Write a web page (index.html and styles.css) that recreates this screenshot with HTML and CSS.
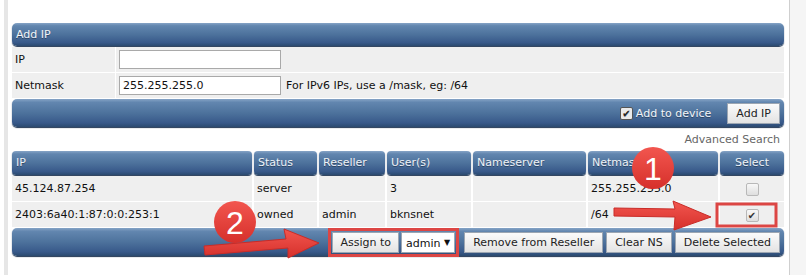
FILE: index.html
```html
<!DOCTYPE html>
<html>

<head>
	<meta charset="utf-8">
	<title>IP Management</title>
	<link rel="stylesheet" href="styles.css">
</head>

<body class = "body">

	<div class = "page">

		<!-- add ip form -->
		<div class = "bar titleBar">Add IP</div>
		<div class = "formRow">
			<div class = "formLabel">IP</div>
			<div class = "formField"><span class = "textBox"></span></div>
		</div>
		<div class = "formRow">
			<div class = "formLabel">Netmask</div>
			<div class = "formField"><span class = "textBox">255.255.255.0</span><span class = "hint">For IPv6 IPs, use a /mask, eg: /64</span></div>
		</div>
		<div class = "bar footBar">
			<span class = "checkBox checked dark"></span>
			<span class = "footLabel">Add to device</span>
			<span class = "button">Add IP</span>
		</div>

		<div class = "searchLink">Advanced Search</div>

		<!-- ip list -->
		<div class = "ipGrid">
			<div class = "head">IP</div>
			<div class = "head">Status</div>
			<div class = "head">Reseller</div>
			<div class = "head">User(s)</div>
			<div class = "head">Nameserver</div>
			<div class = "head">Netmask</div>
			<div class = "head center">Select</div>

			<div class = "cell">45.124.87.254</div>
			<div class = "cell">server</div>
			<div class = "cell"></div>
			<div class = "cell">3</div>
			<div class = "cell"></div>
			<div class = "cell">255.255.255.0</div>
			<div class = "cell center"><span class = "checkBox"></span></div>

			<div class = "cell">2403:6a40:1:87:0:0:253:1</div>
			<div class = "cell">owned</div>
			<div class = "cell">admin</div>
			<div class = "cell">bknsnet</div>
			<div class = "cell"></div>
			<div class = "cell">/64</div>
			<div class = "cell center"><span class = "checkBox checked"></span></div>
		</div>
		<div class = "bar footBar">
			<span class = "assignGroup">
				<span class = "button">Assign to</span><span class = "select">admin <span class = "arrowDown">&#9660;</span></span>
			</span>
			<span class = "button">Remove from Reseller</span>
			<span class = "button">Clear NS</span>
			<span class = "button">Delete Selected</span>
		</div>

	</div>

	<!-- red annotations drawn over the screenshot -->
	<svg class = "notes" width = "806" height = "275" viewBox = "0 0 806 275">
		<defs>
			<linearGradient id = "redFill" x1 = "0" y1 = "0" x2 = "0" y2 = "1">
				<stop offset = "0" stop-color = "#f2564f"/>
				<stop offset = "1" stop-color = "#d6302b"/>
			</linearGradient>
		</defs>
		<rect x = "717" y = "204" width = "59" height = "22" fill = "none" stroke = "#dc4644" stroke-width = "3"/>
		<polygon points = "614,208 675,209 673,201 711,217 674,230 675,217 614,216" fill = "url(#redFill)" stroke = "#c92c28" stroke-width = "1" stroke-linejoin = "round"/>
		<polygon points = "204,246 286,239 284,229 319,243 288,258 288,248 205,255" fill = "url(#redFill)" stroke = "#c92c28" stroke-width = "1" stroke-linejoin = "round"/>
		<circle cx = "653" cy = "168" r = "21" fill = "url(#redFill)"/>
		<text x = "653" y = "180" class = "noteNum">1</text>
		<circle cx = "235" cy = "222" r = "21" fill = "url(#redFill)"/>
		<text x = "235" y = "234" class = "noteNum">2</text>
	</svg>

</body>

</html>
```

FILE: styles.css
```css
.body {
	margin: 0;
	width: 806px;
	height: 275px;
	overflow: hidden;
	position: relative;
	background: linear-gradient(90deg, #FFFFFF 4px, #F5F5F5 4px);
	font: 11px "DejaVu Sans", Verdana, sans-serif;
	color: #111111;
}

.page {
	margin-left: 4px;
	width: 772px;
	height: 252px;
	padding: 23px 5px 0 4px;
	background-color: #FFFFFF;
	border-left: 4px solid #E6E6E6;
	border-right: 1px solid #CFCFCF;
}

.bar {
	background: linear-gradient(to bottom, #86A4C6 0, #6286AF 12%, #4D729C 50%, #38598A 85%, #2B4A6F 100%);
	border-radius: 5px;
	box-shadow: 0 1px 1px #1E3452;
	color: #F2F5F9;
	text-shadow: 0 1px 0 rgba(0, 0, 0, 0.35);
}

.titleBar {
	height: 23px;
	line-height: 23px;
	padding-left: 4px;
	margin-bottom: 1px;
}

.formRow {
	display: flex;
	height: 25px;
	margin-top: 1px;
	background-color: #EFEFEF;
}

.formLabel {
	width: 100px;
	padding-left: 3px;
	line-height: 25px;
	border-right: 1px solid #FFFFFF;
}

.formField {
	display: flex;
	align-items: center;
	padding-left: 3px;
}

.textBox {
	display: inline-block;
	width: 157px;
	height: 17px;
	line-height: 17px;
	padding-left: 3px;
	background-color: #FFFFFF;
	border: 1px solid #A9A9A9;
	color: #111111;
}

.hint {
	margin-left: 5px;
}

.footBar {
	display: flex;
	justify-content: flex-end;
	align-items: center;
	gap: 3px;
	height: 28px;
	margin-top: 1px;
	padding-right: 4px;
}

.footLabel {
	margin-left: 0;
	margin-right: 13px;
}

.button {
	display: inline-block;
	height: 19px;
	line-height: 19px;
	padding: 0 8px;
	background: linear-gradient(to bottom, #FBFBFB, #E3E3E3);
	border: 1px solid #9CA6B2;
	color: #222222;
	text-shadow: none;
}

.assignGroup {
	display: inline-flex;
	gap: 2px;
	padding: 1px;
	margin-right: 5px;
	outline: 3px solid #DC4644;
}

.assignGroup .button {
	padding: 0 7px;
}

.select {
	display: inline-block;
	height: 19px;
	line-height: 19px;
	padding: 0 4px;
	background-color: #FFFFFF;
	border: 1px solid #9CA6B2;
	color: #111111;
	text-shadow: none;
}

.arrowDown {
	font-size: 8px;
	vertical-align: 2px;
}

.checkBox {
	display: inline-flex;
	align-items: center;
	justify-content: center;
	width: 11px;
	height: 11px;
	border: 1px solid #B8B8B8;
	border-radius: 2px;
	background: linear-gradient(to bottom, #F8F8F8, #DEDEDE);
	vertical-align: middle;
}

.checked::after {
	content: "\2714";
	font-size: 10px;
	line-height: 11px;
	color: #333333;
}

.dark {
	background: #EAEAEA;
	border-color: #555555;
}

.dark::after {
	color: #222222;
}

.searchLink {
	height: 24px;
	line-height: 26px;
	text-align: right;
	padding-right: 4px;
	color: #666666;
}

.ipGrid {
	display: grid;
	grid-template-columns: 240px 63px 66px 84px 113px 130px 64px;
	column-gap: 2px;
	row-gap: 1px;
}

.head {
	height: 24px;
	line-height: 24px;
	padding-left: 4px;
	background: linear-gradient(to bottom, #86A4C6 0, #6286AF 12%, #4D729C 50%, #38598A 85%, #2B4A6F 100%);
	border-radius: 4px;
	box-shadow: 0 1px 1px #1E3452;
	color: #EEF2F7;
	text-shadow: 0 1px 0 rgba(0, 0, 0, 0.35);
}

.cell {
	height: 25px;
	line-height: 25px;
	padding-left: 3px;
	background-color: #EFEFEF;
	white-space: nowrap;
	overflow: hidden;
}

.center {
	text-align: center;
	padding-left: 0;
}

.notes {
	position: absolute;
	left: 0;
	top: 0;
}

.noteNum {
	font: 32px "Liberation Sans", Arial, sans-serif;
	fill: #FFFFFF;
	text-anchor: middle;
}
```
